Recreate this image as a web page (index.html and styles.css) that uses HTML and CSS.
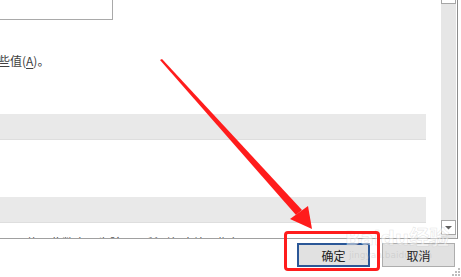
FILE: index.html
```html
<!DOCTYPE html>
<html lang="zh-CN">
<head>
  <meta charset="UTF-8" />
  <title>选项</title>
  <link rel="stylesheet" href="styles.css">
</head>
<body>
  <div class="dialog">
    <div class="pane">
      <div class="content">
        <div class="field"></div>
        <div class="label">些值(<u>A</u>)。</div>
        <div class="band band-1"></div>
        <div class="band band-2"></div>
        <div class="cut-line">显示使用此数字，为除以下所列行中比日期行</div>
      </div>
      <div class="scrollbar">
        <div class="arrow-up"></div>
        <div class="arrow-down">
          <svg width="9" height="5" viewBox="0 0 9 5"><polygon points="1,1 8,1 4.5,4.5" fill="#606060"/></svg>
        </div>
      </div>
    </div>

    <div class="actions">
      <button class="btn btn-ok">确定</button>
      <button class="btn">取消</button>
    </div>

    <svg class="grip" width="9" height="9" viewBox="0 0 9 9">
      <rect x="7" y="1" width="2" height="2" fill="#bdbdbd"/>
      <rect x="4" y="4" width="2" height="2" fill="#bdbdbd"/>
      <rect x="7" y="4" width="2" height="2" fill="#bdbdbd"/>
      <rect x="1" y="7" width="2" height="2" fill="#bdbdbd"/>
      <rect x="4" y="7" width="2" height="2" fill="#bdbdbd"/>
      <rect x="7" y="7" width="2" height="2" fill="#bdbdbd"/>
    </svg>

    <!-- annotation layer -->
    <div class="watermark">
      <span class="wm-big">Baidu经验</span>
      <span class="wm-small">jingyan.baidu.com</span>
    </div>
    <svg class="arrow" width="461" height="277" viewBox="0 0 461 277">
      <polygon points="160,60 162,59 302,210 296,215" fill="#ff1c1c"/>
      <polygon points="290,219 308,206 312,229" fill="#ff1c1c"/>
    </svg>
    <div class="highlight"></div>
  </div>
</body>
</html>
```
FILE: styles.css
```css
body {
  margin: 0;
  background: #fff;
  font-family: "Noto Sans CJK SC", "Noto Sans", sans-serif;
  overflow: hidden;
}

.dialog {
  position: relative;
  width: 461px;
  height: 277px;
}

.pane {
  display: flex;
  width: 457px;
  height: 238px;
  border-right: 1px solid #8c8c8c;
  border-bottom: 1px solid #a0a0a0;
  box-sizing: content-box;
  overflow: hidden;
}

.content {
  flex: 1;
  display: flex;
  flex-direction: column;
  padding-right: 15px;
  overflow: hidden;
}

.field {
  width: 114px;
  height: 21px;
  margin: -1px 0 0 -1px;
  border: 1px solid #a9a9a9;
  box-sizing: border-box;
  flex-shrink: 0;
}

.label {
  margin: 33px 0 0 -2px;
  font-size: 12px;
  line-height: 16px;
  color: #404040;
  flex-shrink: 0;
}

.label u {
  text-decoration-thickness: 1px;
  text-underline-offset: 2px;
}

.band {
  height: 25px;
  background: #e9e9e9;
  border-bottom: 1px solid #dedede;
  flex-shrink: 0;
}

.band-1 { margin-top: 45px; }
.band-2 { margin-top: 57px; }

.cut-line {
  margin: 13px 0 0 2px;
  font-size: 12px;
  line-height: 14px;
  color: #555;
  white-space: nowrap;
  flex-shrink: 0;
}

.scrollbar {
  width: 15px;
  margin-right: 1px;
  background: #e6e6e6;
  display: flex;
  flex-direction: column;
  justify-content: space-between;
}

.arrow-up {
  height: 4px;
  margin-top: -1px;
  border: 1px solid #a6a6a6;
  border-top: none;
  background: #fff;
}

.arrow-down {
  height: 13px;
  margin-bottom: 3px;
  border: 1px solid #a6a6a6;
  background: #fff;
  display: flex;
  align-items: center;
  justify-content: center;
}

.actions {
  display: flex;
  justify-content: flex-end;
  gap: 12px;
  padding: 4px 6px 0 0;
}

.btn {
  width: 73px;
  height: 24px;
  padding: 0;
  background: #e1e1e1;
  border: 1px solid #adadad;
  font-family: "Noto Sans CJK SC", sans-serif;
  font-size: 12px;
  color: #222;
}

.btn-ok {
  border: 2px solid #2b5797;
}

.grip {
  position: absolute;
  right: 1px;
  bottom: 1px;
}

.watermark {
  position: absolute;
  left: 345px;
  top: 226px;
  display: flex;
  flex-direction: column;
  color: rgba(255, 255, 255, 0.5);
  -webkit-text-stroke: 0.6px rgba(180, 180, 180, 0.35);
  font-family: "DejaVu Sans", "Noto Sans CJK SC", sans-serif;
}

.wm-big {
  font-size: 20px;
  font-weight: bold;
  line-height: 24px;
}

.wm-small {
  font-size: 9px;
  line-height: 10px;
  margin-left: 4px;
  -webkit-text-stroke: 0;
  color: rgba(170, 170, 170, 0.3);
}

.arrow {
  position: absolute;
  left: 0;
  top: 0;
}

.highlight {
  position: absolute;
  left: 284px;
  top: 231px;
  width: 96px;
  height: 40px;
  border: 3px solid #ff1c1c;
  border-radius: 4px;
  box-sizing: border-box;
}
```
